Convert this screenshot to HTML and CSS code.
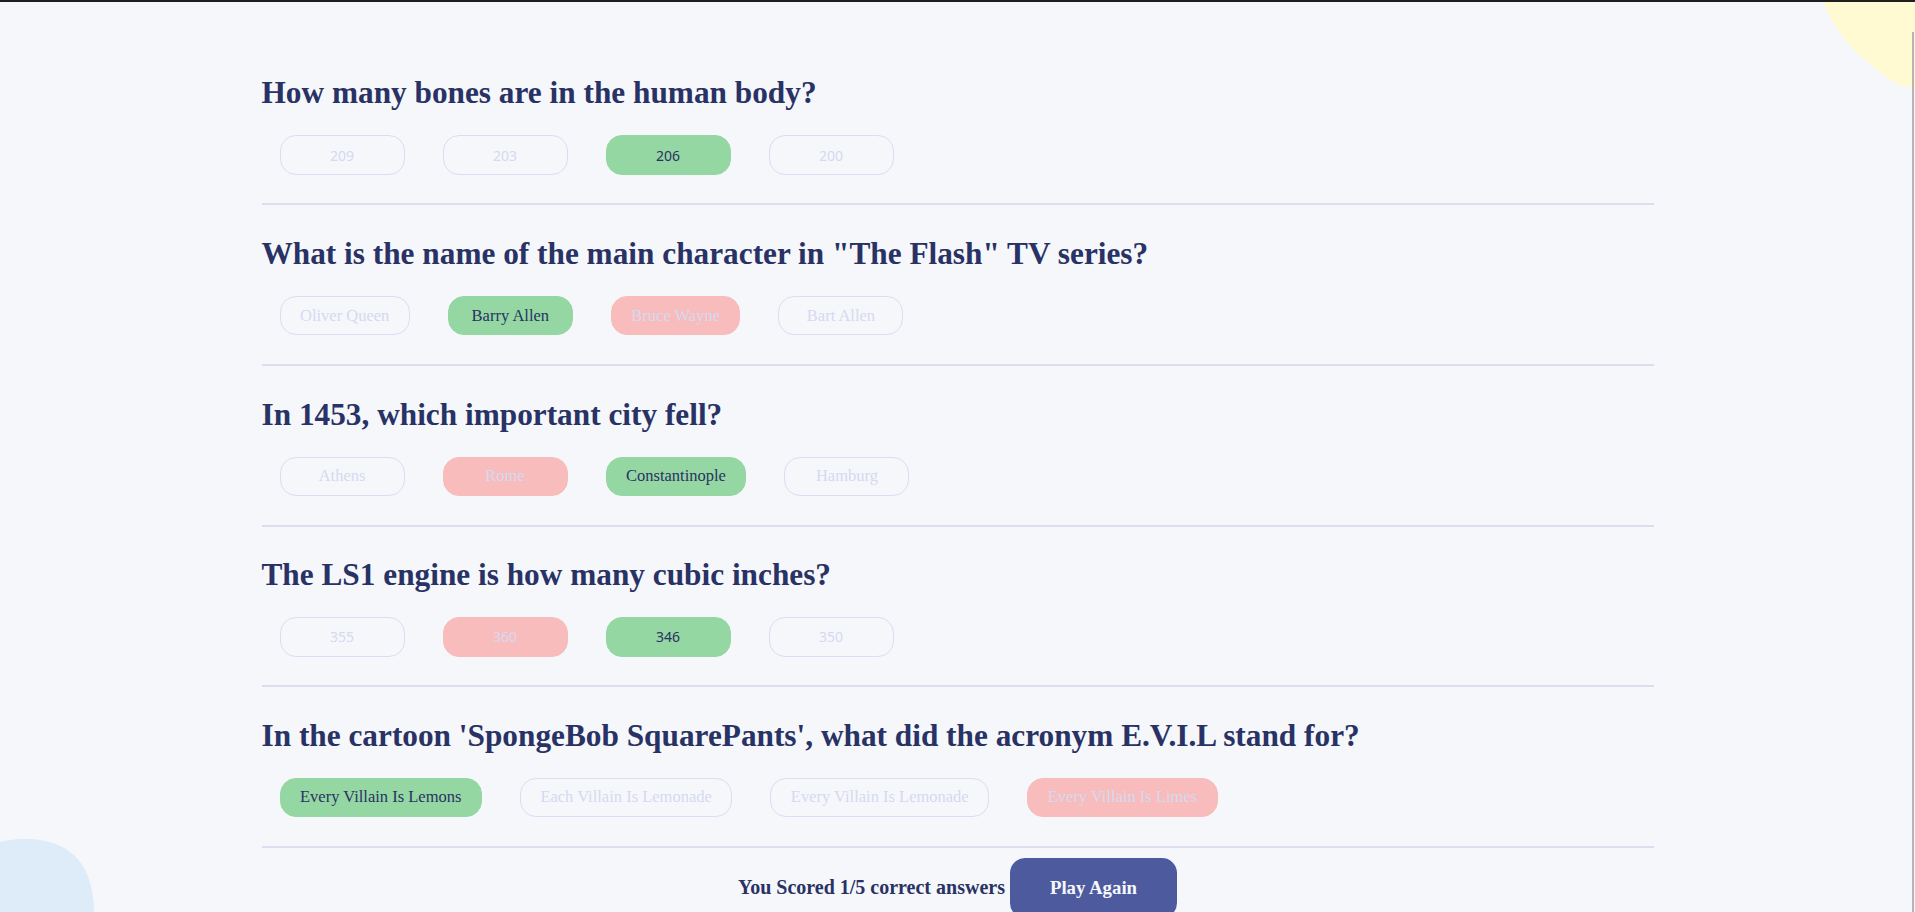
FILE: index.html
```html
<!DOCTYPE html>
<html lang="en">
<head>
<meta charset="utf-8">
<title>Quizzical</title>
<link rel="stylesheet" href="styles.css">
</head>
<body>
<div class="top-edge"></div>
<svg class="blob blob-yellow" viewBox="0 0 92 88" preserveAspectRatio="none" aria-hidden="true">
  <path d="M0 0 C4 12 9 22 16 31 C22 40 30 50 40 58 C50 66 60 76 72 83 C78 86 85 87 92 87 L92 0 Z" fill="#FFFAD1"/>
</svg>
<svg class="blob blob-blue" viewBox="0 0 94 73" preserveAspectRatio="none" aria-hidden="true">
  <path d="M0 3 C12 0 28 -1 40 1 C60 4 78 14 87 35 C92 48 94 60 94 73 L0 73 Z" fill="#DEEBF8"/>
</svg>
<div class="scroll-line"></div>

<main class="quiz">
  <section class="question">
    <h2 class="question-title">How many bones are in the human body?</h2>
    <div class="answers">
      <button class="answer answer--num">209</button>
      <button class="answer answer--num">203</button>
      <button class="answer answer--num answer--correct">206</button>
      <button class="answer answer--num">200</button>
    </div>
  </section>

  <section class="question">
    <h2 class="question-title">What is the name of the main character in "The Flash" TV series?</h2>
    <div class="answers">
      <button class="answer">Oliver Queen</button>
      <button class="answer answer--correct">Barry Allen</button>
      <button class="answer answer--wrong">Bruce Wayne</button>
      <button class="answer">Bart Allen</button>
    </div>
  </section>

  <section class="question">
    <h2 class="question-title">In 1453, which important city fell?</h2>
    <div class="answers">
      <button class="answer">Athens</button>
      <button class="answer answer--wrong">Rome</button>
      <button class="answer answer--correct">Constantinople</button>
      <button class="answer">Hamburg</button>
    </div>
  </section>

  <section class="question">
    <h2 class="question-title">The LS1 engine is how many cubic inches?</h2>
    <div class="answers">
      <button class="answer answer--num">355</button>
      <button class="answer answer--num answer--wrong">360</button>
      <button class="answer answer--num answer--correct">346</button>
      <button class="answer answer--num">350</button>
    </div>
  </section>

  <section class="question">
    <h2 class="question-title">In the cartoon 'SpongeBob SquarePants', what did the acronym E.V.I.L stand for?</h2>
    <div class="answers">
      <button class="answer answer--correct">Every Villain Is Lemons</button>
      <button class="answer">Each Villain Is Lemonade</button>
      <button class="answer">Every Villain Is Lemonade</button>
      <button class="answer answer--wrong">Every Villain Is Limes</button>
    </div>
  </section>

  <div class="result">
    <p class="score">You Scored 1/5 correct answers</p>
    <button class="play-btn">Play Again</button>
  </div>
</main>
</body>
</html>
```

FILE: styles.css
```css
html, body {
  margin: 0;
  height: 100%;
  overflow: hidden;
}

body {
  position: relative;
  background: #F5F7FB;
  color: #293264;
  font-family: "Liberation Serif", "Times New Roman", serif;
}

.top-edge {
  position: absolute;
  top: 0;
  left: 0;
  right: 0;
  height: 2px;
  background: #1f1f1f;
  z-index: 3;
}

.scroll-line {
  position: absolute;
  top: 32px;
  bottom: 0;
  right: 1px;
  width: 2px;
  background: #b5b5b5;
  z-index: 3;
}

.blob {
  position: absolute;
  display: block;
  z-index: 0;
}

.blob-yellow {
  top: 0;
  right: 0;
  width: 92px;
  height: 88px;
}

.blob-blue {
  left: 0;
  bottom: 0;
  width: 94px;
  height: 73px;
}

.quiz {
  position: relative;
  z-index: 1;
  width: 1392px;
  margin: 0 auto;
  padding-top: 44.8px;
}

.question {
  padding: 30.7px 0 28.5px;
  border-bottom: 2px solid #DBDEF0;
}

.question-title {
  margin: 0;
  font-size: 31.3px;
  line-height: 36px;
  font-weight: 700;
  color: #293264;
}

.answers {
  display: flex;
  gap: 38px;
  margin-top: 24px;
  padding-left: 18px;
}

.answer {
  box-sizing: border-box;
  display: inline-flex;
  align-items: center;
  justify-content: center;
  height: 39.4px;
  min-width: 125px;
  padding: 0 19.5px;
  border: 1px solid #DCDDF2;
  border-radius: 16px;
  background: transparent;
  color: #D6D9F0;
  font-family: "Liberation Serif", "Times New Roman", serif;
  font-size: 16.5px;
  white-space: nowrap;
}

.answer--num {
  font-family: "Noto Sans", "Open Sans", sans-serif;
  font-size: 14px;
}

.answer--correct {
  background: #94D7A2;
  border-color: #94D7A2;
  color: #293264;
}

.answer--wrong {
  background: #F8BCBC;
  border-color: #F8BCBC;
  color: #D6D9F0;
}

.result {
  display: flex;
  justify-content: center;
  align-items: baseline;
  gap: 5px;
  padding-top: 10px;
}

.score {
  margin: 0;
  font-size: 20px;
  font-weight: 700;
  color: #293264;
}

.play-btn {
  border: none;
  border-radius: 15px;
  background: #4D5B9E;
  color: #F5F7FB;
  font-family: "Liberation Serif", "Times New Roman", serif;
  font-size: 18.8px;
  font-weight: 700;
  padding: 19.3px 40px;
}
```
